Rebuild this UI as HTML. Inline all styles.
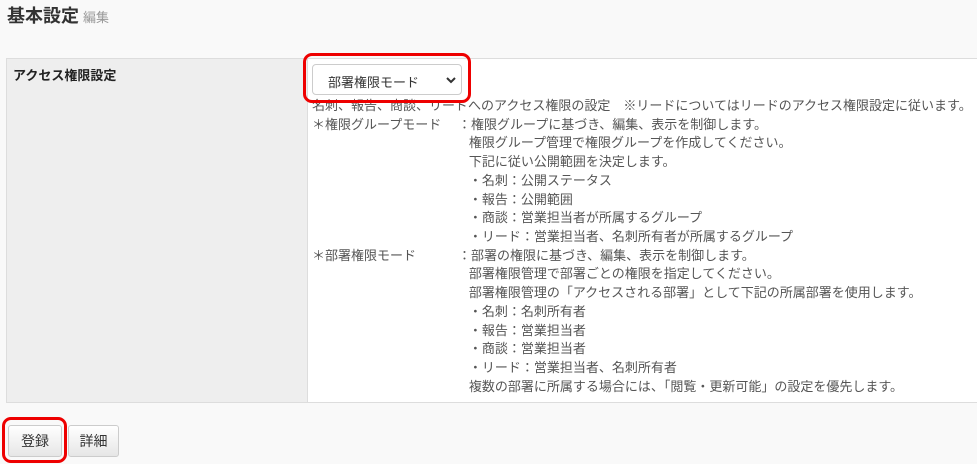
<!DOCTYPE html>
<html><head><meta charset="utf-8"><style>
body{margin:0;width:977px;height:464px;background:#f9f9f9;font-family:"Liberation Sans","Noto Sans CJK JP",sans-serif;position:relative;overflow:hidden;color:#333}
.a{position:absolute;white-space:nowrap}
h1{position:absolute;left:7px;top:2px;margin:0;font-size:18px;font-weight:bold;color:#333}
h1 span{font-size:13px;color:#999;font-weight:normal;margin-left:4px}
.tbl{position:absolute;left:6px;top:58px;width:971px;height:345px;border:1px solid #ddd;border-right:none;box-sizing:border-box;background:#fff}
.lab{position:absolute;left:0;top:0;width:300px;height:100%;background:#eee;border-right:1px solid #ddd}
.lab b{position:absolute;left:6px;top:6px;font-size:13px;color:#222}
.sel{position:absolute;left:312px;top:64px;width:150px;height:31px;border:1px solid #ccc;border-radius:4px;background:#fff;box-sizing:border-box;font-size:13px;color:#333}
.red{position:absolute;border:3px solid #e00;border-radius:9px;box-sizing:border-box}
.txt{position:absolute;left:312px;top:97px;font-size:13px;line-height:18.73px;color:#555}
.txt div{position:relative;height:18.73px;white-space:nowrap}
.c2{position:absolute;left:146px}
.btn{position:absolute;top:425px;height:32px;border:1px solid #ccc;border-radius:3px;background:linear-gradient(#fff,#e6e6e6);box-sizing:border-box;font-size:14px;text-align:center;line-height:30px;color:#333}
</style></head><body>
<h1>基本設定<span>編集</span></h1>
<div class="tbl"><div class="lab"><b>アクセス権限設定</b></div></div>
<div class="txt">
<div>名刺、報告、商談、リードへのアクセス権限の設定　※リードについてはリードのアクセス権限設定に従います。</div>
<div>＊権限グループモード<span class="c2">：権限グループに基づき、編集、表示を制御します。</span></div>
<div><span class="c2">&nbsp;&nbsp;&nbsp;権限グループ管理で権限グループを作成してください。</span></div>
<div><span class="c2">&nbsp;&nbsp;&nbsp;下記に従い公開範囲を決定します。</span></div>
<div><span class="c2">&nbsp;&nbsp;&nbsp;・名刺：公開ステータス</span></div>
<div><span class="c2">&nbsp;&nbsp;&nbsp;・報告：公開範囲</span></div>
<div><span class="c2">&nbsp;&nbsp;&nbsp;・商談：営業担当者が所属するグループ</span></div>
<div><span class="c2">&nbsp;&nbsp;&nbsp;・リード：営業担当者、名刺所有者が所属するグループ</span></div>
<div>＊部署権限モード<span class="c2">：部署の権限に基づき、編集、表示を制御します。</span></div>
<div><span class="c2">&nbsp;&nbsp;&nbsp;部署権限管理で部署ごとの権限を指定してください。</span></div>
<div><span class="c2">&nbsp;&nbsp;&nbsp;部署権限管理の「アクセスされる部署」として下記の所属部署を使用します。</span></div>
<div><span class="c2">&nbsp;&nbsp;&nbsp;・名刺：名刺所有者</span></div>
<div><span class="c2">&nbsp;&nbsp;&nbsp;・報告：営業担当者</span></div>
<div><span class="c2">&nbsp;&nbsp;&nbsp;・商談：営業担当者</span></div>
<div><span class="c2">&nbsp;&nbsp;&nbsp;・リード：営業担当者、名刺所有者</span></div>
<div><span class="c2">&nbsp;&nbsp;&nbsp;複数の部署に所属する場合には、「閲覧・更新可能」の設定を優先します。</span></div>
</div>
<div class="sel"><span class="a" style="left:15px;top:7px">部署権限モード</span>
<svg class="a" style="left:133px;top:11px" width="10" height="8" viewBox="0 0 10 8"><path d="M1 2l4 4 4-4" stroke="#333" stroke-width="2" fill="none"/></svg></div>
<div class="red" style="left:303px;top:53px;width:168px;height:50px"></div>
<div class="btn" style="left:8px;width:54px">登録</div>
<div class="btn" style="left:68px;width:51px">詳細</div>
<div class="red" style="left:2px;top:417px;width:65px;height:46px"></div>
</body></html>
